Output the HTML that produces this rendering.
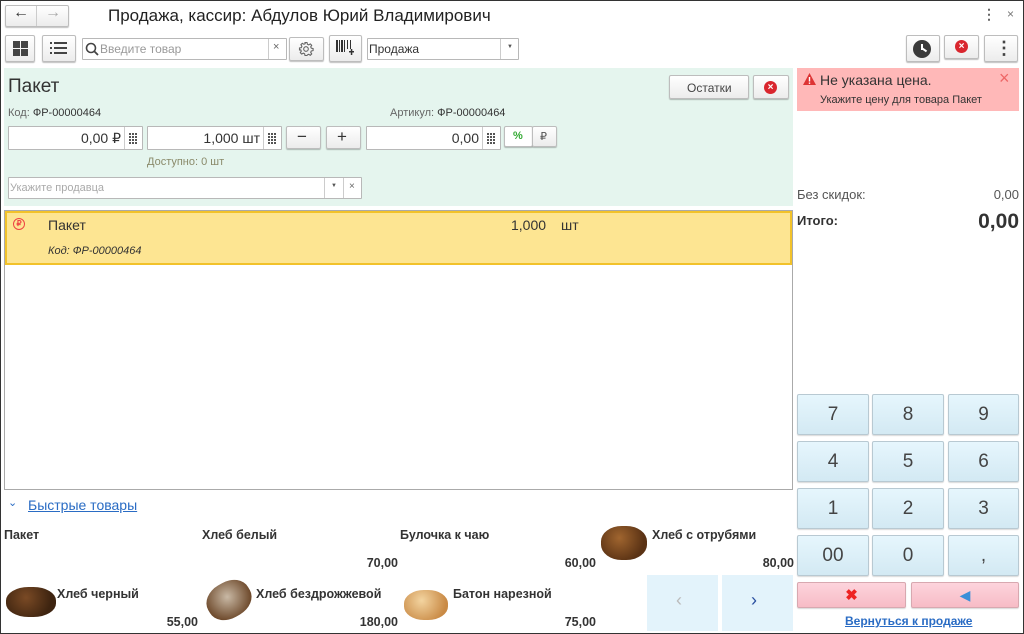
<!DOCTYPE html>
<html><head><meta charset="utf-8"><style>
*{box-sizing:border-box;margin:0;padding:0}
body{width:1024px;height:634px;overflow:hidden;background:#fff;font-family:"Liberation Sans",Arial,sans-serif;color:#333;position:relative}
.a{position:absolute}
.frame{left:0;top:0;width:1024px;height:634px;border:1px solid #333;}
.btn{position:absolute;background:linear-gradient(#fff,#ececec);border:1px solid #bdbdbd;border-radius:2px;box-shadow:0 1px 1px rgba(0,0,0,.25)}
.fld{position:absolute;background:#fff;border:1px solid #b8b8b8;border-radius:1px}
.t{position:absolute;white-space:nowrap}
.key{position:absolute;background:linear-gradient(#e6f6fd,#d3e9f3);border:1px solid #b8c9d2;border-radius:2px;font-size:19px;color:#444;text-align:center;box-shadow:0 1px 1px rgba(0,0,0,.15)}
.grid{position:absolute;width:18px;border-left:1px solid #ccc;top:0;bottom:0;right:0}
.grid svg{position:absolute;left:4px;top:6px}
.rx{position:absolute;width:13px;height:13px;border-radius:50%;background:#d9262e;color:#fff;font-size:10px;font-weight:bold;text-align:center;line-height:13px}
.q{font-size:12.5px;font-weight:bold;color:#333}
.bread{position:absolute;border-radius:45%;background:radial-gradient(circle at 40% 35%,#a0652f,#5a3214 70%)}
</style></head><body>
<svg width="0" height="0" style="position:absolute"><defs><g id="dg" fill="#555"><rect x="0" y="0" width="2" height="2"/><rect x="3" y="0" width="2" height="2"/><rect x="6" y="0" width="2" height="2"/><rect x="0" y="3" width="2" height="2"/><rect x="3" y="3" width="2" height="2"/><rect x="6" y="3" width="2" height="2"/><rect x="0" y="6" width="2" height="2"/><rect x="3" y="6" width="2" height="2"/><rect x="6" y="6" width="2" height="2"/><rect x="0" y="9" width="2" height="2"/><rect x="3" y="9" width="2" height="2"/><rect x="6" y="9" width="2" height="2"/></g></defs></svg>
<div class="a frame"></div>

<div class="btn" style="left:5px;top:5px;width:64px;height:22px"></div>
<div class="a" style="left:36px;top:6px;width:1px;height:20px;background:#ccc"></div>
<div class="t" style="left:13px;top:4px;font-size:16px;color:#333">&#8592;</div>
<div class="t" style="left:45px;top:4px;font-size:16px;color:#aaa">&#8594;</div>
<div class="t" style="left:108px;top:6px;font-size:17px;color:#222">Продажа, кассир: Абдулов Юрий Владимирович</div>
<div class="t" style="left:982px;top:6px;font-size:14px;color:#666;font-weight:bold">&#8942;</div>
<div class="t" style="left:1007px;top:7px;font-size:12px;color:#777">&#215;</div>

<div class="btn" style="left:5px;top:35px;width:30px;height:27px"></div>
<div class="a" style="left:13px;top:41px;width:7px;height:7px;background:#444"></div><div class="a" style="left:21px;top:41px;width:7px;height:7px;background:#444"></div>
<div class="a" style="left:13px;top:49px;width:7px;height:7px;background:#444"></div><div class="a" style="left:21px;top:49px;width:7px;height:7px;background:#444"></div>
<div class="btn" style="left:42px;top:35px;width:34px;height:27px"></div>
<svg class="a" style="left:50px;top:41px" width="18" height="14"><g fill="#444"><rect x="0" y="1" width="2" height="2"/><rect x="4" y="1" width="13" height="2"/><rect x="0" y="6" width="2" height="2"/><rect x="4" y="6" width="13" height="2"/><rect x="0" y="11" width="2" height="2"/><rect x="4" y="11" width="13" height="2"/></g></svg>
<div class="fld" style="left:82px;top:38px;width:205px;height:22px"></div>
<div class="a" style="left:268px;top:39px;width:1px;height:20px;background:#ccc"></div>
<svg class="a" style="left:85px;top:42px" width="14" height="14"><circle cx="6" cy="6" r="4.5" fill="none" stroke="#444" stroke-width="1.6"/><line x1="9" y1="9" x2="13" y2="13" stroke="#444" stroke-width="1.8"/></svg>
<div class="t" style="left:100px;top:42px;font-size:12px;color:#999">Введите товар</div>
<div class="t" style="left:273px;top:41px;font-size:11px;color:#666">&#215;</div>
<div class="btn" style="left:289px;top:37px;width:35px;height:24px"></div>
<svg class="a" style="left:298px;top:41px" width="16" height="16" viewBox="0 0 16 16"><g fill="none" stroke="#666" stroke-width="1.1"><circle cx="8" cy="8" r="2.3"/><path d="M7 1.5h2l.4 1.8 1.3.6 1.6-1 1.4 1.4-1 1.6.6 1.3 1.8.4v2l-1.8.4-.6 1.3 1 1.6-1.4 1.4-1.6-1-1.3.6L9 14.5H7l-.4-1.8-1.3-.6-1.6 1-1.4-1.4 1-1.6-.6-1.3L1.5 9V7l1.8-.4.6-1.3-1-1.6 1.4-1.4 1.6 1 1.3-.6z"/></g></svg>
<div class="btn" style="left:329px;top:35px;width:33px;height:27px"></div>
<svg class="a" style="left:336px;top:40px" width="20" height="16"><g fill="#333"><rect x="0" y="0" width="2" height="12"/><rect x="3" y="0" width="1" height="12"/><rect x="5" y="0" width="2" height="12"/><rect x="8" y="0" width="1" height="12"/><rect x="11" y="0" width="1" height="9"/><rect x="14" y="0" width="1" height="9"/><rect x="13" y="11" width="5" height="1.5"/><rect x="14.8" y="9" width="1.5" height="6"/></g></svg>
<div class="fld" style="left:367px;top:38px;width:152px;height:22px"></div>
<div class="a" style="left:500px;top:39px;width:1px;height:20px;background:#ccc"></div>
<div class="t" style="left:369px;top:42px;font-size:12px;color:#333">Продажа</div>
<div class="t" style="left:507px;top:44px;font-size:6px;color:#555">&#9660;</div>
<div class="btn" style="left:906px;top:35px;width:34px;height:27px"></div>
<div class="a" style="left:913px;top:40px;width:18px;height:18px;border-radius:50%;background:#3a3a3a"></div>
<div class="a" style="left:921px;top:44px;width:2px;height:6px;background:#fff"></div><div class="a" style="left:922px;top:49px;width:5px;height:2px;background:#fff;transform:rotate(35deg)"></div>
<div class="btn" style="left:944px;top:35px;width:35px;height:24px"></div>
<div class="rx" style="left:955px;top:40px">&#215;</div>
<div class="btn" style="left:984px;top:35px;width:34px;height:27px"></div>
<div class="t" style="left:995px;top:38px;font-size:18px;font-weight:bold;color:#444">&#8942;</div>

<div class="a" style="left:4px;top:68px;width:789px;height:138px;background:#e5f5ee"></div>
<div class="t" style="left:8px;top:76px;font-size:19px;color:#333">Пакет</div>
<div class="btn" style="left:669px;top:75px;width:80px;height:24px"></div>
<div class="t" style="left:687px;top:81px;font-size:12px;color:#444">Остатки</div>
<div class="btn" style="left:753px;top:75px;width:36px;height:24px"></div>
<div class="rx" style="left:764px;top:81px">&#215;</div>
<div class="t" style="left:8px;top:107px;font-size:11px;color:#666">Код: <span style="color:#333">ФР-00000464</span></div>
<div class="t" style="left:390px;top:107px;font-size:11px;color:#666">Артикул: <span style="color:#333">ФР-00000464</span></div>
<div class="fld" style="left:8px;top:126px;width:135px;height:24px"><div class="grid"><svg width="8" height="11"><use href="#dg"/></svg></div></div>
<div class="t" style="left:8px;top:130px;width:113px;text-align:right;font-size:14px;color:#333">0,00 ₽</div>
<div class="fld" style="left:147px;top:126px;width:135px;height:24px"><div class="grid"><svg width="8" height="11"><use href="#dg"/></svg></div></div>
<div class="t" style="left:147px;top:130px;width:113px;text-align:right;font-size:14px;color:#333">1,000 шт</div>
<div class="btn" style="left:286px;top:126px;width:35px;height:23px"></div>
<div class="t" style="left:297px;top:127px;font-size:17px;color:#333">&#8722;</div>
<div class="btn" style="left:326px;top:126px;width:35px;height:23px"></div>
<div class="t" style="left:337px;top:127px;font-size:17px;color:#333">+</div>
<div class="fld" style="left:366px;top:126px;width:135px;height:24px"><div class="grid"><svg width="8" height="11"><use href="#dg"/></svg></div></div>
<div class="t" style="left:366px;top:130px;width:113px;text-align:right;font-size:14px;color:#333">0,00</div>
<div class="btn" style="left:504px;top:126px;width:29px;height:21px;background:#fff"></div>
<div class="t" style="left:513px;top:130px;font-size:11px;color:#3a3;font-weight:bold">%</div>
<div class="btn" style="left:532px;top:126px;width:25px;height:21px"></div>
<div class="t" style="left:540px;top:130px;font-size:11px;color:#555">₽</div>
<div class="t" style="left:147px;top:156px;font-size:11px;color:#8a8a6a">Доступно: 0 шт</div>
<div class="fld" style="left:8px;top:177px;width:354px;height:22px"></div>
<div class="a" style="left:324px;top:178px;width:1px;height:20px;background:#ccc"></div>
<div class="a" style="left:343px;top:178px;width:1px;height:20px;background:#ccc"></div>
<div class="t" style="left:10px;top:182px;font-size:11px;color:#aaa">Укажите продавца</div>
<div class="t" style="left:331px;top:183px;font-size:6px;color:#555">&#9660;</div>
<div class="t" style="left:349px;top:181px;font-size:10px;color:#666">&#215;</div>

<div class="a" style="left:797px;top:68px;width:222px;height:43px;background:#ffb8b8"></div>
<svg class="a" style="left:803px;top:73px" width="13" height="12"><path d="M6.5 0 L13 12 L0 12 Z" fill="#d33"/><rect x="5.8" y="4" width="1.4" height="4.5" fill="#fff"/><rect x="5.8" y="9.5" width="1.4" height="1.4" fill="#fff"/></svg>
<div class="t" style="left:820px;top:72px;font-size:14px;color:#333">Не указана цена.</div>
<div class="t" style="left:820px;top:94px;font-size:11px;color:#333">Укажите цену для товара Пакет</div>
<div class="t" style="left:999px;top:68px;font-size:18px;color:#e66">&#215;</div>

<div class="t" style="left:797px;top:187px;font-size:13px;color:#555">Без скидок:</div>
<div class="t" style="left:940px;top:187px;width:79px;text-align:right;font-size:13px;color:#555">0,00</div>
<div class="t" style="left:797px;top:213px;font-size:13px;font-weight:bold;color:#333">Итого:</div>
<div class="t" style="left:900px;top:210px;width:119px;text-align:right;font-size:21px;font-weight:bold;color:#333">0,00</div>

<div class="a" style="left:4px;top:210px;width:789px;height:280px;border:1px solid #aaa"></div>
<div class="a" style="left:5px;top:211px;width:787px;height:54px;background:#fde592;border:2px solid #f2c22a"></div>
<div class="a" style="left:13px;top:218px;width:12px;height:12px;border-radius:50%;border:1.5px solid #e44;color:#e44;font-size:8px;text-align:center;line-height:9px;font-weight:bold">₽</div>
<div class="t" style="left:48px;top:217px;font-size:14px;color:#333">Пакет</div>
<div class="t" style="left:48px;top:245px;font-size:11px;font-style:italic;color:#333">Код: ФР-00000464</div>
<div class="t" style="left:511px;top:217px;font-size:14px;color:#333">1,000</div>
<div class="t" style="left:561px;top:217px;font-size:14px;color:#333">шт</div>

<div class="t" style="left:8px;top:496px;font-size:11px;color:#2a6cc4">&#8964;</div>
<div class="t" style="left:28px;top:497px;font-size:14px;color:#2a6cc4;text-decoration:underline">Быстрые товары</div>
<div class="t q" style="left:4px;top:528px">Пакет</div>
<div class="t q" style="left:202px;top:528px">Хлеб белый</div>
<div class="t q" style="left:400px;top:528px">Булочка к чаю</div>
<div class="bread" style="left:601px;top:526px;width:46px;height:34px"></div>
<div class="t q" style="left:652px;top:528px">Хлеб с отрубями</div>
<div class="t q" style="left:300px;top:556px;width:98px;text-align:right">70,00</div>
<div class="t q" style="left:500px;top:556px;width:96px;text-align:right">60,00</div>
<div class="t q" style="left:700px;top:556px;width:94px;text-align:right">80,00</div>
<div class="bread" style="left:6px;top:587px;width:50px;height:30px;background:radial-gradient(circle at 40% 35%,#7a4a25,#3e2410 70%)"></div>
<div class="t q" style="left:57px;top:587px">Хлеб черный</div>
<div class="bread" style="left:206px;top:582px;width:46px;height:36px;background:radial-gradient(circle at 50% 40%,#c9b9a5,#6e4a2c 75%);transform:rotate(-30deg)"></div>
<div class="t q" style="left:256px;top:587px">Хлеб бездрожжевой</div>
<div class="bread" style="left:404px;top:590px;width:44px;height:30px;background:radial-gradient(circle at 40% 35%,#f3d4a0,#c98a45 75%)"></div>
<div class="t q" style="left:453px;top:587px">Батон нарезной</div>
<div class="t q" style="left:100px;top:615px;width:98px;text-align:right">55,00</div>
<div class="t q" style="left:300px;top:615px;width:98px;text-align:right">180,00</div>
<div class="t q" style="left:500px;top:615px;width:96px;text-align:right">75,00</div>
<div class="a" style="left:647px;top:575px;width:71px;height:56px;background:#e3f3fb"></div>
<div class="a" style="left:722px;top:575px;width:71px;height:56px;background:#e3f3fb"></div>
<div class="t" style="left:676px;top:590px;font-size:18px;color:#bbb">&#8249;</div>
<div class="t" style="left:751px;top:590px;font-size:18px;color:#2a4fa0">&#8250;</div>

<div class="key" style="left:797px;top:394px;width:72px;height:41px;line-height:40px">7</div>
<div class="key" style="left:872px;top:394px;width:72px;height:41px;line-height:40px">8</div>
<div class="key" style="left:948px;top:394px;width:71px;height:41px;line-height:40px">9</div>
<div class="key" style="left:797px;top:441px;width:72px;height:41px;line-height:40px">4</div>
<div class="key" style="left:872px;top:441px;width:72px;height:41px;line-height:40px">5</div>
<div class="key" style="left:948px;top:441px;width:71px;height:41px;line-height:40px">6</div>
<div class="key" style="left:797px;top:488px;width:72px;height:41px;line-height:40px">1</div>
<div class="key" style="left:872px;top:488px;width:72px;height:41px;line-height:40px">2</div>
<div class="key" style="left:948px;top:488px;width:71px;height:41px;line-height:40px">3</div>
<div class="key" style="left:797px;top:535px;width:72px;height:41px;line-height:40px">00</div>
<div class="key" style="left:872px;top:535px;width:72px;height:41px;line-height:40px">0</div>
<div class="key" style="left:948px;top:535px;width:71px;height:41px;line-height:40px">,</div>
<div class="key" style="left:797px;top:582px;width:109px;height:26px;line-height:25px;background:linear-gradient(#fdd4dc,#f7bcc6);border-color:#d8a8b0;color:#e22;font-weight:bold;font-size:15px">&#10006;</div>
<div class="key" style="left:911px;top:582px;width:108px;height:26px;line-height:25px;background:linear-gradient(#fdd4dc,#f7bcc6);border-color:#d8a8b0;color:#3a8fd8;font-size:14px">&#9664;</div>
<div class="t" style="left:845px;top:614px;font-size:12px;font-weight:bold;color:#2a6cc4;text-decoration:underline">Вернуться к продаже</div>
</body></html>
